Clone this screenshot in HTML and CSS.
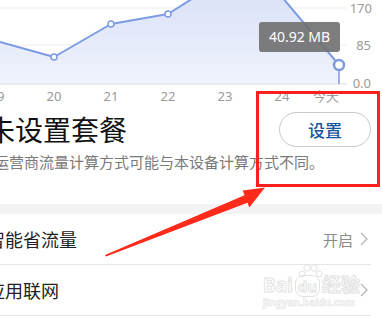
FILE: index.html
```html
<!DOCTYPE html>
<html lang="zh-CN">
<head>
    <meta charset="UTF-8">
    <meta name="viewport" content="width=device-width, initial-scale=1.0">
    <title>流量管理</title>
    <link rel="stylesheet" href="styles.css">
</head>
<body>
    <div class="screen">
        <!-- daily usage chart -->
        <svg class="chart" width="382" height="105" viewBox="0 0 382 105">
            <defs>
                <linearGradient id="fill" x1="0" y1="0" x2="0" y2="1">
                    <stop offset="0" stop-color="#d6dff7"/>
                    <stop offset="1" stop-color="#f0f3fc"/>
                </linearGradient>
            </defs>
            <line x1="0" y1="8" x2="347" y2="8" class="grid"/>
            <line x1="0" y1="45" x2="347" y2="45" class="grid"/>
            <polygon points="0,42 54,57 111,24 168,14 225,-22 282,-3 339,65 339,84 0,84" fill="url(#fill)"/>
            <line x1="0" y1="84" x2="347" y2="84" class="base"/>
            <polyline points="0,42 54,57 111,24 168,14 225,-22 282,-3 339,65" class="trend"/>
            <line x1="339" y1="65" x2="339" y2="84" class="trend thin"/>
            <circle cx="54" cy="57" r="3" class="dot"/>
            <circle cx="111" cy="24" r="3" class="dot"/>
            <circle cx="168" cy="14" r="3" class="dot"/>
            <circle cx="339" cy="65" r="5" class="dot big"/>

            <rect x="259" y="22" width="81" height="30" rx="3" class="tip"/>
            <text x="299.5" y="42" class="tip-text">40.92 MB</text>

            <text x="372" y="13" class="axis" text-anchor="end">170</text>
            <text x="371" y="50" class="axis" text-anchor="end">85</text>
            <text x="371" y="88" class="axis" text-anchor="end">0.0</text>

            <text x="-3" y="101" class="axis" text-anchor="middle">19</text>
            <text x="54" y="101" class="axis" text-anchor="middle">20</text>
            <text x="111" y="101" class="axis" text-anchor="middle">21</text>
            <text x="168" y="101" class="axis" text-anchor="middle">22</text>
            <text x="225" y="101" class="axis" text-anchor="middle">23</text>
            <text x="282" y="101" class="axis" text-anchor="middle">24</text>
            <text x="326" y="101" class="axis" text-anchor="middle">今天</text>
        </svg>

        <div class="plan">
            <div class="plan-row">
                <div class="plan-title">未设置套餐</div>
                <button class="plan-btn">设置</button>
            </div>
            <div class="plan-note">运营商流量计算方式可能与本设备计算方式不同。</div>
        </div>

        <div class="band"></div>

        <div class="list">
            <div class="item">
                <span class="item-name">智能省流量</span>
                <span class="item-value">开启</span>
                <svg class="chev" width="8" height="14" viewBox="0 0 8 14"><polyline points="1,1 7,7 1,13"/></svg>
            </div>
            <div class="item">
                <span class="item-name">应用联网</span>
                <svg class="chev" width="8" height="14" viewBox="0 0 8 14"><polyline points="1,1 7,7 1,13"/></svg>
            </div>
        </div>

        <!-- annotation overlays -->
        <div class="mark-box"></div>
        <svg class="mark-arrow" width="382" height="319" viewBox="0 0 382 319">
            <polygon points="105,255 244.5,195.3 242.7,190.6 265,187.5 249.3,207.4 247.5,202.7 106,256.5"/>
        </svg>

        <div class="watermark">
            <svg class="wm-paw" width="26" height="14" viewBox="0 0 26 14">
                <circle cx="5" cy="10" r="3"/>
                <circle cx="10" cy="4" r="3.2"/>
                <circle cx="17" cy="4" r="3.2"/>
                <circle cx="22" cy="10" r="3"/>
            </svg>
            <div class="wm-logo">Bai<span class="paw">du</span>经验</div>
            <div class="wm-url">jingyan.baidu.com</div>
        </div>
    </div>
</body>
</html>
```

FILE: styles.css
```css
body {
    margin: 0;
    padding: 0;
    background-color: #ffffff;
    font-family: "Noto Sans", "Noto Sans CJK SC", sans-serif;
    overflow: hidden;
}

.screen {
    position: relative;
    width: 382px;
    height: 319px;
    overflow: hidden;
}

.chart {
    display: block;
}
.chart .grid {
    stroke: #ededed;
    stroke-width: 1;
}
.chart .base {
    stroke: #dcdcdc;
    stroke-width: 1;
}
.chart .trend {
    fill: none;
    stroke: #7c9be2;
    stroke-width: 2;
    stroke-linejoin: round;
}
.chart .thin {
    stroke-width: 1.5;
}
.chart .dot {
    fill: #ffffff;
    stroke: #7c9be2;
    stroke-width: 1.5;
}
.chart .big {
    stroke-width: 2.5;
}
.chart .tip {
    fill: #6f6f6f;
    opacity: 0.9;
}
.chart .tip-text {
    fill: #ffffff;
    font-size: 14px;
    text-anchor: middle;
}
.chart .axis {
    fill: #9a9a9a;
    font-size: 13px;
}

/* plan section */
.plan {
    margin-left: -13px;
    margin-right: 11px;
    padding-top: 7px;
}
.plan-row {
    display: flex;
    justify-content: space-between;
    align-items: center;
    height: 35px;
}
.plan-title {
    font-size: 28px;
    line-height: 35px;
    color: #111111;
    font-family: "Noto Sans CJK SC", sans-serif;
}
.plan-btn {
    width: 92px;
    height: 35px;
    border: 1px solid #c9c9c9;
    border-radius: 18px;
    background: #ffffff;
    color: #17569f;
    font-size: 17px;
    font-weight: 500;
    font-family: "Noto Sans CJK SC", sans-serif;
    padding: 0;
}
.plan-note {
    margin-top: 5px;
    padding-left: 7px;
    font-size: 15px;
    line-height: 20px;
    color: #7a7a7a;
    font-family: "Noto Sans CJK SC", sans-serif;
    white-space: nowrap;
}

.band {
    height: 10px;
    margin-top: 32px;
    background-color: #f3f3f3;
}

/* settings list */
.list {
    margin-left: -13px;
    margin-right: 11px;
}
.item {
    display: flex;
    align-items: center;
    height: 50px;
    border-bottom: 1px solid #e6e6e6;
    font-family: "Noto Sans CJK SC", sans-serif;
}
.item-name {
    flex: 1;
    font-size: 18px;
    color: #222222;
}
.item-value {
    font-size: 15px;
    color: #8a8a8a;
    margin-right: 7px;
}
.chev {
    margin-right: 3px;
}
.chev polyline {
    fill: none;
    stroke: #b5b5b5;
    stroke-width: 1.3;
}

/* annotations */
.mark-box {
    position: absolute;
    left: 256px;
    top: 91px;
    width: 118px;
    height: 90px;
    border: 3px solid #ff1f1f;
}
.mark-arrow {
    position: absolute;
    left: 0;
    top: 0;
}
.mark-arrow polygon {
    fill: #ff2a1a;
}

.watermark {
    position: absolute;
    left: 263px;
    top: 264px;
    width: 92px;
    text-align: center;
    color: #ffffff;
    -webkit-text-stroke: 1px #e2e2e2;
    pointer-events: none;
}
.wm-paw {
    display: block;
    margin: 0 auto -3px 34px;
}
.wm-paw circle {
    fill: #ffffff;
    stroke: #e2e2e2;
    stroke-width: 1;
}
.wm-logo {
    font-size: 19px;
    font-weight: bold;
    line-height: 20px;
    font-family: "Noto Sans", "Noto Sans CJK SC", sans-serif;
    white-space: nowrap;
}
.paw {
    margin: 0 2px;
    padding: 0 2px;
    border: 1px solid #e2e2e2;
    border-radius: 8px;
    font-size: 15px;
}
.wm-url {
    font-size: 10px;
    line-height: 13px;
    font-weight: bold;
    -webkit-text-stroke: 0.6px #e2e2e2;
}
```
